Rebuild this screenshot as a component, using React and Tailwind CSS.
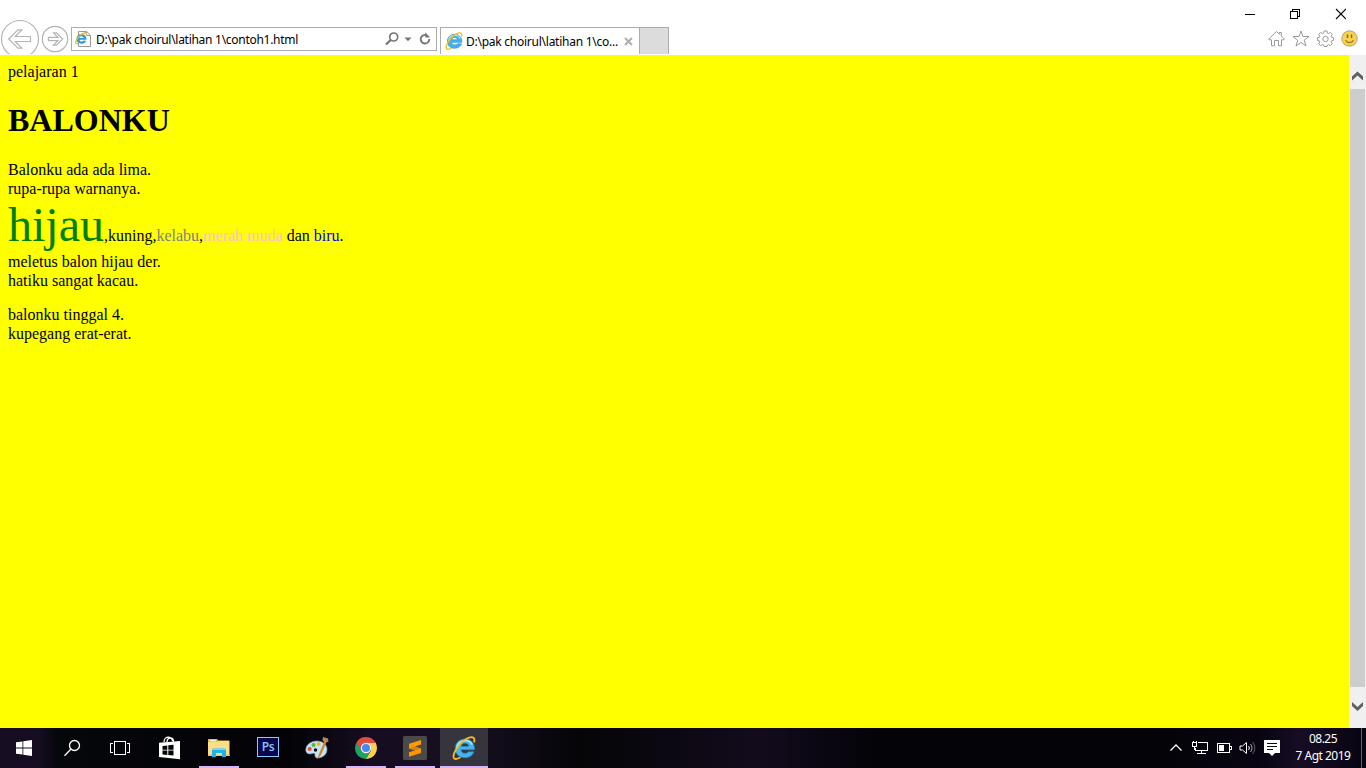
import React from 'react';

const IeLogo = ({ className }) => (
  <svg viewBox="0 0 24 24" className={className}>
    <path d="M22.500 13.800H9c.2 2.300 1.700 3.500 4 3.500 1.500 0 2.600-.6 3.200-1.600h5.800c-1.300 3.800-4.500 6-9.100 6-5.700 0-9.700-3.700-9.700-9.200 0-5.600 4-9.500 9.700-9.500 5.800 0 9.600 4 9.600 9.600v1.200zM9.100 10.300h7.600c-.2-1.900-1.700-3.100-3.700-3.100-2.100 0-3.500 1.200-3.900 3.100z" fill="#45b4ec" stroke="#1c7fc4" strokeWidth=".7" />
    <path d="M4.800 12c.5-4.300 3.700-7.500 8-7.600 3.500 0 6.300 1.600 7.400 4.300" fill="none" stroke="#b5e8fd" strokeWidth="1.500" />
    <path d="M22 6.400c.9-2.600.3-4.500-1.300-5C17.700.4 11.700 3.700 7.300 9 2.800 14.300.3 20.300 2.100 22.300c1.200 1.200 3.700.6 6.400-1" fill="none" stroke="#f6bd1e" strokeWidth="1.800" />
  </svg>
);

const NavButtons = () => (
  <svg width="71" height="54" viewBox="0 0 71 54" fill="none" stroke="#b4b4b4" strokeWidth="1.200" className="shrink-0">
    <circle cx="20" cy="39" r="18.500" />
    <path d="M8.700 39l9.300-9.200h3.800l-6.500 6.700h15.200v5H15.300l6.500 6.700H18z" />
    <circle cx="55" cy="39" r="12.700" />
    <path d="M62.700 39l-6.200-6.200h-3l4.400 4.500h-9.400v3.400h9.400l-4.400 4.500h3z" />
  </svg>
);

const AddressBar = () => (
  <div className="mt-[27px] flex h-6 w-[366px] shrink-0 items-center border border-[#acacac] bg-white">
    <svg width="18" height="18" viewBox="0 0 18 18" className="ml-[3px] shrink-0">
      <path d="M3.500 1.500h8.200l3.800 3.800v11.200h-12z" fill="#fafafa" stroke="#999" />
      <path d="M11.500 1.500v4h4" fill="none" stroke="#999" />
      <path d="M11.400 9.800H4.500c.1 1.200.9 1.800 2 1.800.8 0 1.300-.2 1.700-.8h2.900c-.6 2-2.300 3-4.600 3-3 0-5-1.900-5-4.700 0-2.900 2-5 5-5 2.900 0 4.900 2.100 4.900 5.100zM4.500 8h4.100c-.1-1-.9-1.700-2-1.700-1.200 0-1.900.7-2.100 1.700z" fill="#2c9be0" />
      <path d="M11.500 4.500c.2-1.800-1-2.200-3-1.300C4.500 5 .3 10.300.8 13c.2 1.100 1.500 1.100 3 .3" fill="none" stroke="#f4b41c" strokeWidth="1.300" />
    </svg>
    <span className="ml-[3px] w-[289px] whitespace-pre pt-[2px] text-[12px] leading-4 tracking-[-0.28px] text-black">{'D:\\pak choirul\\latihan 1\\contoh1.html'}</span>
    <svg width="50" height="18" viewBox="0 0 50 18" className="shrink-0" fill="none" stroke="#767676">
      <circle cx="8.700" cy="7" r="4" strokeWidth="1.700" />
      <path d="M5.700 10L1 14.500" strokeWidth="2.300" />
      <path d="M19.500 7.500h7l-3.500 3.700z" fill="#767676" stroke="none" />
      <path d="M41.800 5.300A4.300 4.300 0 1 0 44.300 9" strokeWidth="1.900" />
      <path d="M40.300 2.300v5.200h4.800z" fill="#767676" stroke="none" />
    </svg>
  </div>
);

const Tabs = () => (
  <div className="ml-[3px] mt-[27px] flex h-[27px] shrink-0">
    <div className="flex w-[199px] items-center border-l border-t border-[#acacac] bg-white">
      <IeLogo className="ml-[4px] h-[18px] w-[18px] shrink-0" />
      <span className="ml-[3px] w-[152px] whitespace-pre pt-[2px] text-[12px] leading-4 tracking-[-0.25px] text-black">{'D:\\pak choirul\\latihan 1\\co...'}</span>
      <svg width="9" height="9" viewBox="0 0 9 9" className="ml-[6px] shrink-0">
        <path d="M1 1l7 7M8 1L1 8" stroke="#adadad" strokeWidth="2" />
      </svg>
    </div>
    <div className="w-[30px] border border-b-0 border-[#acacac] bg-[#dcdcdc]" />
  </div>
);

const WindowTools = () => (
  <div className="ml-auto flex shrink-0 flex-col items-end">
    <div className="flex h-[28px] items-center pr-5">
      <svg width="102" height="12" viewBox="0 0 102 12" fill="none" stroke="#000" shapeRendering="crispEdges">
        <path d="M1 6.500h10" />
        <path d="M46.500 3.500h7v7h-7zM48.500 3.500v-2h7v7h-2" />
        <path d="M92 1l10 10M102 1L92 11" shapeRendering="auto" strokeWidth="1.100" />
      </svg>
    </div>
    <div className="flex h-5 items-center gap-[7px] pr-[8px]">
      <svg width="17" height="17" viewBox="0 0 17 17" fill="none" stroke="#999">
        <path d="M1 8.800l7.500-7.300 2.800 2.700V2.500h2v3.600L16 8.800v1h-2.500v6h-3v-5.300h-4v5.300h-3v-6H1z" />
      </svg>
      <svg width="18" height="17" viewBox="0 0 17 17" fill="none" stroke="#999">
        <path d="M8.500 1l2 5.500h6l-4.800 3.700 1.800 5.800-5-3.500-5 3.500 1.800-5.800L.5 6.500h6z" />
      </svg>
      <svg width="17" height="17" viewBox="0 0 17 17" fill="none" stroke="#999">
        <path d="M7 1h3l.4 2.100 1.200.5L13.300 2.400l2 2-1.200 1.800.5 1.100 2 .4v2.700l-2 .4-.5 1.200 1.200 1.700-2 2-1.700-1.200-1.200.5L10 16.500H7l-.4-1.500-1.200-.5-1.700 1.200-2-2 1.200-1.700-.5-1.200-2-.4V7.700l2-.4.5-1.100-1.200-1.800 2-2 1.700 1.200 1.200-.5z" />
        <circle cx="8.500" cy="9" r="2.700" />
      </svg>
      <svg width="17" height="17" viewBox="0 0 17 17">
        <circle cx="8.500" cy="8.500" r="7.700" fill="#fbd34b" stroke="#a9a08a" />
        <path d="M6.500 4.500v3.500M10.500 4.500v3.500" stroke="#7d6c35" strokeWidth="1.500" />
        <path d="M4.500 10.300c1.500 3 6.500 3 8 0" fill="none" stroke="#917428" strokeWidth="1.200" />
      </svg>
    </div>
  </div>
);

const Lyrics = () => (
  <div className="flex-1 bg-[#ffff00] pl-2 pt-[7px] font-['Liberation_Serif',serif] text-base leading-[19px] text-black">
    <div>pelajaran 1</div>
    <h1 className="mt-[21px] text-[32px] font-bold leading-[36px]">BALONKU</h1>
    <p className="mt-[22px]">
      Balonku ada ada lima.<br />
      rupa-rupa warnanya.
    </p>
    <p className="h-[54px] whitespace-nowrap leading-[54px]">
      <span className="text-[48px] text-[#008000]">hijau</span>
      ,kuning,<span className="text-[#808080]">kelabu</span>,<span className="text-[#ffc0cb]">merah muda</span> dan <span className="text-[#0000ff]">biru</span>.
    </p>
    <p>
      meletus balon hijau der.<br />
      hatiku sangat kacau.
    </p>
    <p className="mt-[15px]">
      balonku tinggal 4.<br />
      kupegang erat-erat.
    </p>
  </div>
);

const Scrollbar = () => (
  <div className="flex w-[17px] shrink-0 flex-col bg-[#f0f0f0] pl-px pr-px">
    <svg width="15" height="34" viewBox="0 0 15 34" className="shrink-0">
      <path d="M2 25.500v-4l5.500-5 5.500 5v4l-5.500-5z" fill="#606060" />
    </svg>
    <div className="h-[598px] bg-[#cdcdcd]" />
    <svg width="15" height="41" viewBox="0 0 15 41" className="shrink-0">
      <path d="M2 15v4l5.500 5 5.500-5v-4l-5.500 5z" fill="#606060" />
    </svg>
  </div>
);

const StartIcon = () => (
  <svg width="16" height="16" viewBox="0 0 16 16" fill="#fff">
    <path d="M0 2.300L6.500 1.400v6.200H0zM7.300 1.300L16 0v7.600H7.300zM0 8.400h6.500v6.200L0 13.700zM7.300 8.400H16V16l-8.700-1.300z" />
  </svg>
);

const SearchIcon = () => (
  <svg width="18" height="18" viewBox="0 0 18 18" fill="none" stroke="#fff" strokeWidth="1.300">
    <circle cx="11.500" cy="6.500" r="5" />
    <path d="M8 10L1.500 16.700" />
  </svg>
);

const TaskViewIcon = () => (
  <svg width="20" height="16" viewBox="0 0 20 16" fill="none" stroke="#fff" shapeRendering="crispEdges">
    <path d="M4.500 1.500h11v13h-11zM3 3.500H.5v9H3M17 3.500h2.500v9H17" />
  </svg>
);

const StoreIcon = () => (
  <svg width="22" height="24" viewBox="0 0 22 24">
    <path d="M5 6c0-3 2-4.800 4.500-4.800S13 3 14 5M8 6c0-3 1.500-4 3.500-4s3 1.500 3 4" fill="none" stroke="#fff" strokeWidth="1.300" />
    <path d="M0 6.800L21 5v18.200L0 21z" fill="#fff" />
    <path d="M3.500 10l4.800-.6v4.300H3.500zM9.300 9.300l5.200-.6v5H9.300zM3.500 14.600h4.800v4.300l-4.800-.5zM9.300 14.600h5.200v5l-5.200-.6z" fill="#050508" />
  </svg>
);

const ExplorerIcon = () => (
  <svg width="22" height="18" viewBox="0 0 22 18">
    <path d="M0 0h9l1 1.500h11V6H0z" fill="#e8b94a" />
    <path d="M2 1h6v1.300H2z" fill="#fff6d8" />
    <path d="M0 3h9l1-1h11.500v15H0z" fill="#fadd85" />
    <path d="M0 15.500h21.500V17H0z" fill="#edc466" />
    <path d="M4 18v-7l1.300-1.500h11.400L18 11v7h-4v-4H8v4z" fill="#1bb4ee" />
    <path d="M5.300 9.500h11.400L18 11H4z" fill="#7ad6f5" />
  </svg>
);

const PhotoshopIcon = () => (
  <div className="mb-[3px] flex h-5 w-[22px] items-center justify-center border border-[#8dc8fb] bg-[#07074e] font-['Open_Sans',sans-serif] text-[12px] font-semibold leading-none tracking-[-0.3px] text-[#8dc8fb]">
    Ps
  </div>
);

const PaintIcon = () => (
  <svg width="24" height="24" viewBox="0 0 24 24">
    <path d="M12 5c6 0 10 4 10 8.500S18 22 12.500 22c-2 0-2.800-1.500-2.500-3 .2-1.500-1-2-2.500-1.500C4 18.700.8 17.500.8 14 .8 8.500 6 5 12 5z" fill="#c5e3f4" stroke="#779fba" strokeWidth=".6" />
    <circle cx="4.700" cy="13" r="2" fill="#e84c32" />
    <circle cx="8.500" cy="9" r="2" fill="#57b536" />
    <circle cx="13.500" cy="8" r="2" fill="#efb727" />
    <circle cx="10.500" cy="14" r="1.700" fill="#090910" />
    <path d="M19.500 5L14 18l-2 5.500 4-4.500 5.500-13z" fill="#d6822e" />
    <path d="M18 1l5 1.500.5 3-4 1.500-2-3z" fill="#b98558" />
  </svg>
);

const ChromeIcon = () => (
  <svg width="22" height="22" viewBox="0 0 22 22">
    <path d="M11 11L1.500 5.500A11 11 0 0 0 11 22l4.500-8z" fill="#1da362" />
    <path d="M11 5.500h9.500A11 11 0 0 1 11 22l5-8.500z" fill="#ffd04b" />
    <path d="M1.500 5.500L6.200 13.700 11 6h9.800A11 11 0 0 0 1.500 5.500z" fill="#df4b3c" />
    <circle cx="11" cy="11" r="5.200" fill="#f4f4f4" />
    <circle cx="11" cy="11" r="4" fill="#4688f4" />
  </svg>
);

const SublimeIcon = () => (
  <svg width="24" height="24" viewBox="0 0 24 24">
    <rect width="24" height="24" rx="1.500" fill="#4a4a4a" />
    <path d="M18 4v4.600L12 10.500l6 2v4.600L6 20.800v-4.500l6-1.900-6-2V7.700z" fill="#ff9800" />
    <path d="M6 12.400l6-1.900 6 2-6 1.900z" fill="#d97f08" />
  </svg>
);

const apps = [
  { name: 'store', icon: <StoreIcon /> },
  { name: 'explorer', icon: <ExplorerIcon />, open: true },
  { name: 'photoshop', icon: <PhotoshopIcon /> },
  { name: 'paint', icon: <PaintIcon /> },
  { name: 'chrome', icon: <ChromeIcon />, open: true },
  { name: 'sublime', icon: <SublimeIcon />, open: true },
  { name: 'ie', icon: <IeLogo className="h-6 w-6" />, active: true },
];

const Tray = () => (
  <div className="ml-auto flex items-center text-white">
    <svg width="112" height="20" viewBox="0 0 112 20" fill="none" stroke="#fff">
      <path d="M1.500 12.500L7 7l5.500 5.500" strokeWidth="1.300" />
      {/* network */}
      <path d="M29 4.500h9.500v8H26.500v-3M32.500 12.500v3M28 15.500h9M23.500 4.500h4v4h-4zM25.500 8.500v3.500M24 3v2M27 3v2" shapeRendering="crispEdges" />
      {/* battery */}
      <path d="M48.500 5.500h12v9h-12zM60.500 8.500h2v3h-2" shapeRendering="crispEdges" />
      <path d="M50 7h5v6h-5z" fill="#fff" stroke="none" />
      {/* volume */}
      <path d="M71 8h2.500l4-3.500v11l-4-3.500H71z" />
      <path d="M79.500 8c1 1.200 1 2.800 0 4" />
      <path d="M81.500 6c2 2.300 2 5.700 0 8" stroke="#aaa" />
      <path d="M83.500 4c3 3.500 3 8.500 0 12" stroke="#666" />
      {/* action center */}
      <path d="M95 2h16v13h-5l-3 3-3-3h-5z" fill="#fff" stroke="none" />
      <path d="M98 5.500h10M98 8.500h10M98 11.500h6" stroke="#08060f" shapeRendering="crispEdges" />
    </svg>
    <div className="ml-[9px] w-[66px] whitespace-nowrap pb-[2px] text-center text-[12px] leading-[17px] tracking-[-0.5px]">
      <div>08.25</div>
      <div>7 Agt 2019</div>
    </div>
    <div className="ml-[5px] mr-1 h-10 w-px bg-[#67636c]" />
  </div>
);

const Taskbar = () => (
  <div className="flex h-10 shrink-0 bg-[linear-gradient(90deg,#170d23_0px,#170d23_38px,#06070b_56px,#030307_290px,#160d20_370px,#171020_465px,#050508_580px,#130b1c_760px,#030308_880px,#030308_1150px,#080511_1260px,#170c24_1300px,#070511_1366px)]">
    <div className="flex w-[146px]">
      <div className="flex w-12 items-center justify-center"><StartIcon /></div>
      <div className="flex w-12 items-center justify-center"><SearchIcon /></div>
      <div className="flex w-12 items-center justify-center"><TaskViewIcon /></div>
    </div>
    <div className="flex gap-px">
      {apps.map((app) => (
        <div key={app.name} className={`flex w-12 flex-col items-center ${app.active ? 'bg-[#36343d]' : ''}`}>
          <div className="flex h-[38px] items-center pt-[2px]">{app.icon}</div>
          {app.open && <div className="h-[2px] w-10 bg-[#d9b4fa]" />}
          {app.active && <div className="h-[2px] w-12 bg-[#d9b4fa]" />}
        </div>
      ))}
    </div>
    <Tray />
  </div>
);

const App = () => (
  <div className="flex h-[768px] w-[1366px] flex-col overflow-hidden bg-white font-['Noto_Sans',sans-serif]">
    <header className="flex h-[55px] shrink-0">
      <NavButtons />
      <AddressBar />
      <Tabs />
      <WindowTools />
    </header>
    <main className="flex h-[673px] shrink-0">
      <Lyrics />
      <Scrollbar />
    </main>
    <Taskbar />
  </div>
);

export default App;
